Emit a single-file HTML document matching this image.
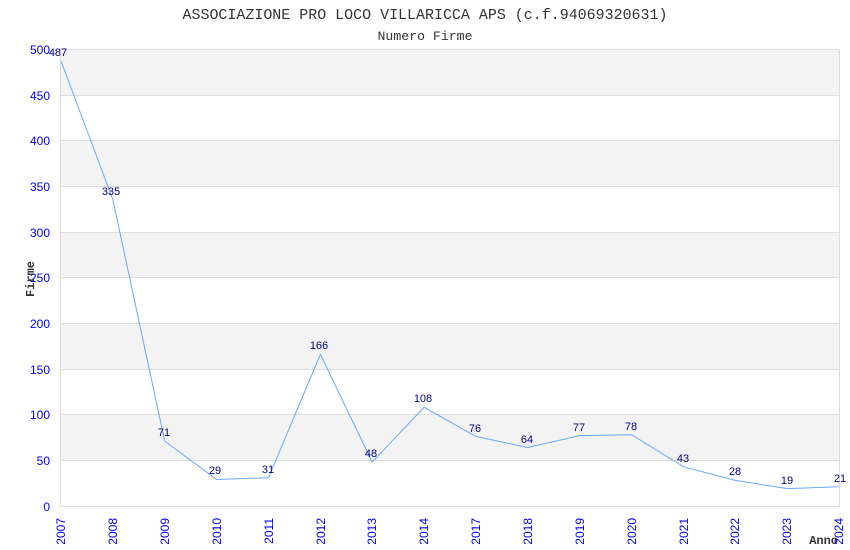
<!DOCTYPE html>
<html><head><meta charset="utf-8"><style>body{margin:0;background:#fff}svg{display:block}</style></head><body>
<svg width="850" height="550" xmlns="http://www.w3.org/2000/svg" font-family="Liberation Sans, sans-serif">
<rect width="850" height="550" fill="#fff"/>
<g fill="#f3f3f3">
<rect x="61" y="49" width="779" height="46"/>
<rect x="61" y="140" width="779" height="46"/>
<rect x="61" y="232" width="779" height="45"/>
<rect x="61" y="323" width="779" height="46"/>
<rect x="61" y="414" width="779" height="46"/>
</g>
<g stroke="#dddddd" stroke-width="1">
<line x1="61" y1="49.5" x2="840" y2="49.5"/>
<line x1="61" y1="95.5" x2="840" y2="95.5"/>
<line x1="61" y1="140.5" x2="840" y2="140.5"/>
<line x1="61" y1="186.5" x2="840" y2="186.5"/>
<line x1="61" y1="232.5" x2="840" y2="232.5"/>
<line x1="61" y1="277.5" x2="840" y2="277.5"/>
<line x1="61" y1="323.5" x2="840" y2="323.5"/>
<line x1="61" y1="369.5" x2="840" y2="369.5"/>
<line x1="61" y1="414.5" x2="840" y2="414.5"/>
<line x1="61" y1="460.5" x2="840" y2="460.5"/>
<line x1="61" y1="506.5" x2="840" y2="506.5"/>
<line x1="60.5" y1="49" x2="60.5" y2="507"/>
<line x1="839.5" y1="49" x2="839.5" y2="507"/>
</g>
<text x="425" y="19" text-anchor="middle" font-family="Liberation Mono, monospace" font-size="15" fill="#333" textLength="485" lengthAdjust="spacingAndGlyphs">ASSOCIAZIONE PRO LOCO VILLARICCA APS (c.f.94069320631)</text>
<text x="425" y="40" text-anchor="middle" font-family="Liberation Mono, monospace" font-size="13" fill="#333" textLength="95" lengthAdjust="spacingAndGlyphs">Numero Firme</text>
<g fill="#0000ee" font-size="12" text-anchor="end">
<text x="50" y="54">500</text><text x="50" y="100">450</text><text x="50" y="145">400</text>
<text x="50" y="191">350</text><text x="50" y="237">300</text><text x="50" y="282">250</text>
<text x="50" y="328">200</text><text x="50" y="374">150</text><text x="50" y="419">100</text>
<text x="50" y="465">50</text><text x="50" y="511">0</text>
</g>
<text transform="translate(34,279) rotate(-90)" text-anchor="middle" font-family="Liberation Mono, monospace" font-weight="bold" font-size="12" fill="#333">Firme</text>
<text x="838" y="544" text-anchor="end" font-family="Liberation Mono, monospace" font-weight="bold" font-size="12" fill="#333">Anno</text>
<g fill="#0000ee" font-size="12" text-anchor="end">
<text transform="translate(65,518) rotate(-90)">2007</text>
<text transform="translate(117,518) rotate(-90)">2008</text>
<text transform="translate(169,518) rotate(-90)">2009</text>
<text transform="translate(221,518) rotate(-90)">2010</text>
<text transform="translate(273,518) rotate(-90)">2011</text>
<text transform="translate(325,518) rotate(-90)">2012</text>
<text transform="translate(376,518) rotate(-90)">2013</text>
<text transform="translate(428,518) rotate(-90)">2014</text>
<text transform="translate(480,518) rotate(-90)">2017</text>
<text transform="translate(532,518) rotate(-90)">2018</text>
<text transform="translate(584,518) rotate(-90)">2019</text>
<text transform="translate(636,518) rotate(-90)">2020</text>
<text transform="translate(688,518) rotate(-90)">2021</text>
<text transform="translate(739,518) rotate(-90)">2022</text>
<text transform="translate(791,518) rotate(-90)">2023</text>
<text transform="translate(843,518) rotate(-90)">2024</text>
</g>
<polyline fill="none" stroke="#66aaff" stroke-width="1" points="61,60.9 112.9,199.8 164.7,441.1 216.6,479.5 268.5,477.7 320.4,354.3 372.2,462.1 424.1,407.3 476,436.5 527.8,447.5 579.7,435.6 631.6,434.7 683.4,466.7 735.3,480.4 787.2,488.6 839,486.8"/>
<g fill="#000080" font-size="11" text-anchor="middle">
<text x="58" y="56">487</text><text x="111" y="195">335</text><text x="164" y="436">71</text>
<text x="215" y="474">29</text><text x="268" y="473">31</text><text x="319" y="349">166</text>
<text x="371" y="457">48</text><text x="423" y="402">108</text><text x="475" y="432">76</text>
<text x="527" y="443">64</text><text x="579" y="431">77</text><text x="631" y="430">78</text>
<text x="683" y="462">43</text><text x="735" y="475">28</text><text x="787" y="484">19</text>
<text x="840" y="482">21</text>
</g>
</svg>
</body></html>
